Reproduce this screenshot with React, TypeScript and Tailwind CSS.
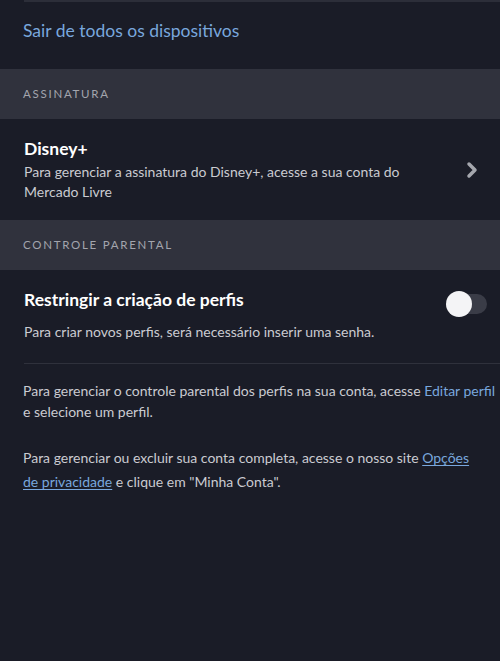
import { ChevronRight } from 'lucide-react';

const font = { fontFamily: 'Lato, "Noto Sans", sans-serif' };

function SectionHeader({ label }: { label: string }) {
  return (
    <div className="h-[50px] bg-[#30323d] flex items-center px-[23px]">
      <span className="text-[11.5px] tracking-[0.15em] text-[#a3a5ad]">{label}</span>
    </div>
  );
}

export default function App() {
  return (
    <div className="w-[500px] h-[661px] bg-[#1a1c27] text-white overflow-hidden" style={font}>
      <div className="ml-6 h-[2px] bg-[#2c2e39]" />
      <div className="h-[67px] px-[23px] pt-[17px]">
        <span className="text-[17.5px] leading-[24px] text-[#79a7dd]">Sair de todos os dispositivos</span>
      </div>

      <SectionHeader label="ASSINATURA" />

      <div className="h-[101px] flex items-center pl-6 pr-4">
        <div className="flex-1">
          <div className="text-[17.5px] font-bold leading-[22px]">Disney+</div>
          <div className="mt-[2px] text-[14px] leading-[20px] text-[#cacbd1] pr-[40px]">
            Para gerenciar a assinatura do Disney+, acesse a sua conta do Mercado Livre
          </div>
        </div>
        <ChevronRight className="w-6 h-6 text-[#a5a7ae]" strokeWidth={3.5} />
      </div>

      <SectionHeader label="CONTROLE PARENTAL" />

      <div className="pl-6 pr-3 pt-[16px] pb-[21px] flex flex-col">
        <div className="flex items-center justify-between">
          <span className="text-[17.5px] leading-[24px] font-bold">Restringir a criação de perfis</span>
          <div className="relative w-[40px] h-[20px] rounded-full bg-[#3a3c47] mr-[1px] mt-[8px]">
            <div className="absolute -left-[1px] -top-[3px] w-[26px] h-[26px] rounded-full bg-[#f4f4f6]" />
          </div>
        </div>
        <div className="mt-[8px] text-[14px] leading-[20px] text-[#cacbd1]">
          Para criar novos perfis, será necessário inserir uma senha.
        </div>
      </div>
      <div className="ml-6 h-px bg-[#2f313c]" />

      <div className="pl-[23px] pr-[2px] pt-[16px] text-[14px] text-[#cacbd1]">
        <p className="leading-[21px]">
          Para gerenciar o controle parental dos perfis na sua conta, acesse{' '}
          <span className="text-[#79a7dd]">Editar perfil</span>
          <br />e selecione um perfil.
        </p>
        <p className="mt-[24px] leading-[24px]">
          Para gerenciar ou excluir sua conta completa, acesse o nosso site{' '}
          <span className="text-[#79a7dd] underline underline-offset-2">
            Opções
            <br />
            de privacidade
          </span>{' '}
          e clique em "Minha Conta".
        </p>
      </div>
    </div>
  );
}
